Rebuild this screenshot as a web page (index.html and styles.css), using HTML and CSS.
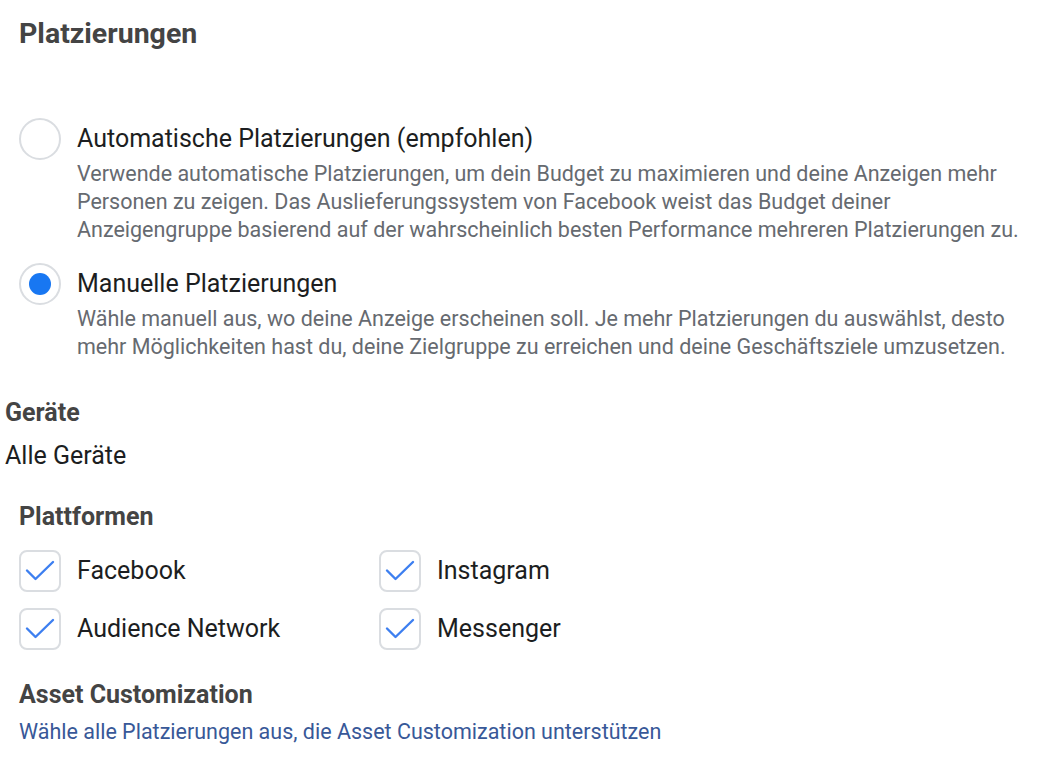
FILE: index.html
```html
<!DOCTYPE html>
<html lang="de">
<head>
<meta charset="utf-8">
<title>Platzierungen</title>
<link rel="stylesheet" href="styles.css">
</head>
<body>
<main class="page">
  <h1 class="title">Platzierungen</h1>

  <div class="options">
    <div class="option">
      <div class="option-head">
        <span class="radio"></span>
        <span class="option-label">Automatische Platzierungen (empfohlen)</span>
      </div>
      <p class="option-desc">Verwende automatische Platzierungen, um dein Budget zu maximieren und deine Anzeigen mehr Personen zu zeigen. Das Auslieferungssystem von Facebook weist das Budget deiner Anzeigengruppe basierend auf der wahrscheinlich besten Performance mehreren Platzierungen zu.</p>
    </div>
    <div class="option">
      <div class="option-head">
        <span class="radio radio-checked"><span class="radio-dot"></span></span>
        <span class="option-label">Manuelle Platzierungen</span>
      </div>
      <p class="option-desc">Wähle manuell aus, wo deine Anzeige erscheinen soll. Je mehr Platzierungen du auswählst, desto mehr Möglichkeiten hast du, deine Zielgruppe zu erreichen und deine Geschäftsziele umzusetzen.</p>
    </div>
  </div>

  <section class="devices">
    <h2 class="sub-title">Geräte</h2>
    <div class="devices-value">Alle Geräte</div>
  </section>

  <section class="platforms">
    <h2 class="sub-title">Plattformen</h2>
    <div class="check-grid">
      <label class="check-item"><span class="checkbox"><svg viewBox="0 0 38 38" class="check-icon"><path d="M6 18.5l8.5 8.5L32 10"/></svg></span><span class="check-label">Facebook</span></label>
      <label class="check-item"><span class="checkbox"><svg viewBox="0 0 38 38" class="check-icon"><path d="M6 18.5l8.5 8.5L32 10"/></svg></span><span class="check-label">Instagram</span></label>
      <label class="check-item"><span class="checkbox"><svg viewBox="0 0 38 38" class="check-icon"><path d="M6 18.5l8.5 8.5L32 10"/></svg></span><span class="check-label">Audience Network</span></label>
      <label class="check-item"><span class="checkbox"><svg viewBox="0 0 38 38" class="check-icon"><path d="M6 18.5l8.5 8.5L32 10"/></svg></span><span class="check-label">Messenger</span></label>
    </div>
  </section>

  <section class="asset">
    <h2 class="sub-title">Asset Customization</h2>
    <a class="asset-link" href="#">Wähle alle Platzierungen aus, die Asset Customization unterstützen</a>
  </section>
</main>
</body>
</html>
```

FILE: styles.css
```css
* { box-sizing: border-box; }

body {
  margin: 0;
  background: #fff;
  font-family: Roboto, "Liberation Sans", Arial, sans-serif;
  color: #1c1e21;
}

.page {
  width: 1060px;
  padding: 19px 20px 0 19px;
}

.title {
  margin: 0;
  font-size: 28.5px;
  line-height: 30px;
  font-weight: 700;
  color: #444444;
}

.options {
  margin-top: 69px;
  display: flex;
  flex-direction: column;
  gap: 19px;
}

.option-head {
  display: flex;
  align-items: center;
  gap: 16px;
  height: 42px;
}

.radio {
  width: 42px;
  height: 42px;
  flex: none;
  border-radius: 50%;
  border: 2px solid #dadde1;
  background: #fff;
  display: flex;
  align-items: center;
  justify-content: center;
}

.radio-dot {
  width: 22px;
  height: 22px;
  border-radius: 50%;
  background: #1877f2;
}

.option-label {
  font-size: 25px;
  line-height: 42px;
  color: #1c1e21;
}

.option-desc {
  margin: 0;
  padding-left: 58px;
  font-size: 21.5px;
  line-height: 28px;
  color: #666a70;
}

.devices {
  margin: 38px 0 0 -14px;
}

.sub-title {
  margin: 0;
  font-size: 25px;
  line-height: 28px;
  font-weight: 700;
  color: #444444;
}

.devices-value {
  margin-top: 15px;
  font-size: 25px;
  line-height: 28px;
  color: #1c1e21;
}

.platforms {
  margin-top: 33px;
}

.check-grid {
  margin-top: 19px;
  display: grid;
  grid-template-columns: 360px 360px;
  row-gap: 16px;
}

.check-item {
  display: flex;
  align-items: center;
  gap: 16px;
}

.checkbox {
  width: 42px;
  height: 42px;
  flex: none;
  border: 2px solid #dadde1;
  border-radius: 8px;
  display: flex;
  align-items: center;
  justify-content: center;
}

.check-icon {
  width: 38px;
  height: 38px;
  fill: none;
  stroke: #3d7ff0;
  stroke-width: 2.4;
  stroke-linecap: round;
  stroke-linejoin: round;
}

.check-label {
  font-size: 25px;
  line-height: 28px;
  color: #1c1e21;
}

.asset {
  margin-top: 31px;
}

.asset-link {
  display: block;
  margin-top: 9px;
  font-size: 21.5px;
  line-height: 28px;
  color: #385898;
  text-decoration: none;
}
```
